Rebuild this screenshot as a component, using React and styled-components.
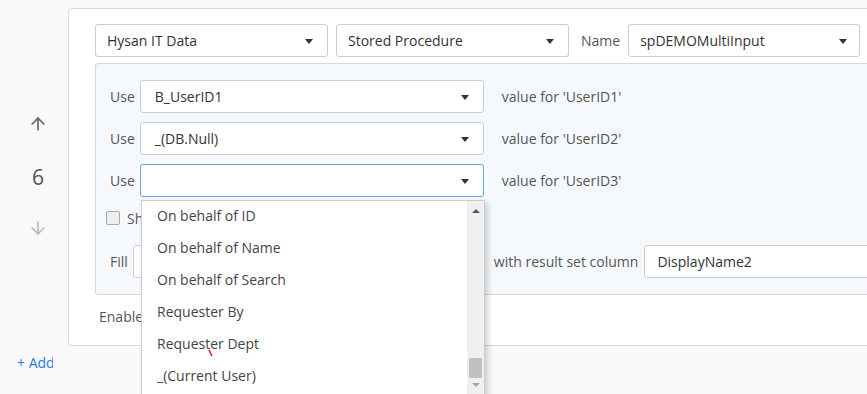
import React from 'react';
import styled, { createGlobalStyle } from 'styled-components';
import { ArrowUp, ArrowDown } from 'lucide-react';

const GlobalStyle = createGlobalStyle`
  html, body {
    margin: 0;
    padding: 0;
    background: #f9f9f9;
    font-family: 'Open Sans', 'Noto Sans', sans-serif;
    font-size: 14px;
    color: #555;
    overflow: hidden;
  }
`;

const Page = styled.div`
  position: relative;
  width: 867px;
  height: 394px;
  overflow: hidden;
`;

const Main = styled.div`
  display: flex;
  align-items: flex-start;
  padding-top: 8px;
`;

const Mover = styled.div`
  width: 68px;
  flex-shrink: 0;
  display: flex;
  flex-direction: column;
  align-items: center;
  padding-top: 106px;
  padding-left: 8px;
  box-sizing: border-box;
  color: #666;
`;

const Order = styled.div`
  font-size: 21px;
  line-height: 26px;
  margin: 30px 0 28px;
  color: #555;
`;

const Card = styled.div`
  flex-shrink: 0;
  width: 860px;
  background: #fff;
  border: 1px solid #dadada;
  border-radius: 4px;
  padding: 15px 0 0 26px;
  box-sizing: border-box;
`;

const TopRow = styled.div`
  display: flex;
  align-items: center;
  gap: 8px;
`;

const Label = styled.span`
  color: #555;
  white-space: nowrap;
  margin: ${p => p.$m || '0'};
`;

const Select = styled.div`
  position: relative;
  width: ${p => p.$w}px;
  height: 33px;
  flex-shrink: 0;
  box-sizing: border-box;
  background: #fff;
  border: 1px solid ${p => (p.$focus ? '#66a8e0' : '#ccc')};
  border-radius: 3px;
  display: flex;
  align-items: center;
  padding-left: ${p => p.$pl || 11}px;
  color: #333;

  &::after {
    content: '';
    position: absolute;
    right: ${p => p.$ar || 14}px;
    top: 14px;
    border-left: 4px solid transparent;
    border-right: 4px solid transparent;
    border-top: 5px solid #333;
  }
`;

const TextBox = styled.div`
  width: ${p => p.$w}px;
  height: 33px;
  flex-shrink: 0;
  box-sizing: border-box;
  background: #fff;
  border: 1px solid #ccc;
  border-radius: 3px;
  display: flex;
  align-items: center;
  padding-left: 12px;
  color: #333;
`;

const Panel = styled.div`
  margin-top: 6px;
  background: #f5f9fd;
  border: 1px solid #dadada;
  border-right: none;
  border-radius: 3px 0 0 3px;
  padding: 16px 0 16px 14px;
`;

const ParamRow = styled.div`
  display: flex;
  align-items: center;
  margin-bottom: 9px;
`;

const Check = styled.div`
  display: flex;
  align-items: center;
  gap: 7px;
  margin: 11px 0 0 -4px;
  height: 20px;
`;

const Box = styled.span`
  width: 12px;
  height: 12px;
  border: 1px solid #aaa;
  border-radius: 2px;
  background: #eee;
`;

const FillRow = styled.div`
  display: flex;
  align-items: center;
  margin-top: 17px;
`;

const Footer = styled.div`
  padding: 12px 0 18px 4px;
  line-height: 20px;
`;

const AddLink = styled.div`
  margin: 7px 0 0 17px;
  width: 36px;
  overflow: hidden;
  white-space: nowrap;
  color: #2a7ad8;
`;

const Dropdown = styled.div`
  position: absolute;
  left: 141px;
  top: 200px;
  width: 344px;
  height: 200px;
  box-sizing: border-box;
  background: #fff;
  border: 1px solid #ccc;
  border-bottom: none;
  box-shadow: 3px 3px 6px rgba(0, 0, 0, 0.18);
  display: flex;
`;

const Options = styled.ul`
  list-style: none;
  margin: 0;
  padding: 0;
  flex: 1;
`;

const Option = styled.li`
  height: 32px;
  line-height: 30px;
  padding-left: 15px;
  color: #444;
`;

const Scrollbar = styled.div`
  width: 17px;
  background: #f0f0f0;
  display: flex;
  flex-direction: column;
  align-items: center;
  padding-top: 8px;
  box-sizing: border-box;
`;

const ScrollArrow = styled.span`
  width: 0;
  height: 0;
  border-left: 4px solid transparent;
  border-right: 4px solid transparent;
  ${p => (p.$down
    ? 'border-top: 4px solid #a3a3a3; margin-top: 5px;'
    : 'border-bottom: 4px solid #555;')}
`;

const Thumb = styled.span`
  width: 13px;
  height: 20px;
  background: #c1c1c1;
  margin-top: 145px;
`;

const Mark = styled.svg`
  position: absolute;
  left: 207px;
  top: 348px;
`;

const params = [
  { value: 'B_UserID1', name: 'UserID1' },
  { value: '_(DB.Null)', name: 'UserID2' },
  { value: '', name: 'UserID3', focus: true },
];

const options = [
  'On behalf of ID',
  'On behalf of Name',
  'On behalf of Search',
  'Requester By',
  'Requester Dept',
  '_(Current User)',
];

export default function App() {
  return (
    <Page>
      <GlobalStyle />
      <Main>
        <Mover>
          <ArrowUp size={20} strokeWidth={2} color="#666" />
          <Order>6</Order>
          <ArrowDown size={20} strokeWidth={2} color="#bbb" />
        </Mover>
        <Card>
          <TopRow>
            <Select $w={233}>Hysan IT Data</Select>
            <Select $w={233}>Stored Procedure</Select>
            <Label $m="0 0 0 4px">Name</Label>
            <Select $w={232} $ar={12}>spDEMOMultiInput</Select>
          </TopRow>
          <Panel>
            {params.map(p => (
              <ParamRow key={p.name}>
                <Label $m="0 5px 0 0">Use</Label>
                <Select $w={344} $pl={14} $ar={14} $focus={p.focus}>{p.value}</Select>
                <Label $m="0 0 0 18px">value for '{p.name}'</Label>
              </ParamRow>
            ))}
            <Check>
              <Box />
              <Label>Show</Label>
            </Check>
            <FillRow>
              <Label $m="0 5px 0 0">Fill</Label>
              <TextBox $w={350} />
              <Label $m="0 6px 0 11px">with result set column</Label>
              <TextBox $w={230}>DisplayName2</TextBox>
            </FillRow>
          </Panel>
          <Footer>Enable</Footer>
        </Card>
      </Main>
      <AddLink>+ Add</AddLink>
      <Dropdown>
        <Options>
          {options.map(o => (
            <Option key={o}>{o}</Option>
          ))}
        </Options>
        <Scrollbar>
          <ScrollArrow />
          <Thumb />
          <ScrollArrow $down />
        </Scrollbar>
      </Dropdown>
      <Mark width="8" height="10" viewBox="0 0 8 10">
        <line x1="2" y1="2" x2="5" y2="8" stroke="#e0201a" strokeWidth="1.6" />
      </Mark>
    </Page>
  );
}
